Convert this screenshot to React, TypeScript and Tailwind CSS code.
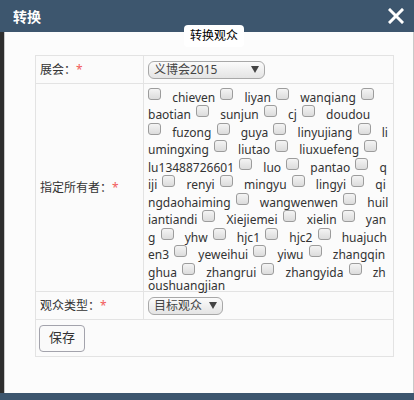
import React from 'react';

const owners = [
  'chieven', 'liyan', 'wanqiang', 'baotian', 'sunjun', 'cj', 'doudou', 'fuzong', 'guya',
  'linyujiang', 'liumingxing', 'liutao', 'liuxuefeng', 'lu13488726601', 'luo', 'pantao',
  'qiji', 'renyi', 'mingyu', 'lingyi', 'qingdaohaiming', 'wangwenwen', 'huiliantiandi',
  'Xiejiemei', 'xielin', 'yang', 'yhw', 'hjc1', 'hjc2', 'huajuchen3', 'yeweihui', 'yiwu',
  'zhangqinghua', 'zhangrui', 'zhangyida', 'zhoushuangjian',
];

const font = { fontFamily: '"Noto Sans", "Noto Sans CJK SC", sans-serif' };

function Label({ text }: { text: string }) {
  return (
    <span className="text-[12px] text-[#333]">
      {text}：<span className="text-[#f25a5a]">*</span>
    </span>
  );
}

function FakeSelect({ value, width }: { value: string; width: string }) {
  return (
    <div
      className={`${width} h-[18px] flex items-center justify-between rounded-[6px] border border-[#a8a8a8] bg-gradient-to-b from-[#fbfbfb] to-[#e4e4e4] pl-[5px] pr-[5px] text-[12px] leading-none text-[#444]`}
    >
      <span>{value}</span>
      <svg width="8" height="7" viewBox="0 0 8 7">
        <path d="M0 0 H8 L4 7 Z" fill="#444" />
      </svg>
    </div>
  );
}

function Checkbox() {
  return (
    <span className="inline-block align-baseline w-[13px] h-[12px] mt-[1.5px] mb-[2px] mr-[8px] rounded-[3px] border border-[#9c9c9c] bg-gradient-to-b from-[#f4f4f4] to-[#dcdcdc]" />
  );
}

export default function App() {
  return (
    <div className="w-[414px] h-[400px] bg-[#2e2e2e] flex flex-col overflow-hidden" style={font}>
      <div className="h-[32px] shrink-0 bg-[#3d566e] flex items-center justify-between pl-[13px] pr-[10px]">
        <span className="text-white font-bold text-[14px]">转换</span>
        <svg width="16" height="16" viewBox="0 0 16 16">
          <path d="M2 2 L14 14 M14 2 L2 14" stroke="#fff" strokeWidth="3" strokeLinecap="square" />
        </svg>
      </div>

      <div className="flex-1 flex pl-[4px]">
        <div className="w-[410px] bg-[#fcfcfc] border-l border-r border-[#c9c9c9]">
          <div className="-mt-[7px] ml-[179px] w-[60px] h-[22px] rounded-[4px] bg-white flex items-center justify-center text-[12px] text-black">
            转换观众
          </div>

          <div className="ml-[30px] mt-[8px] w-[359px] border border-[#e3e3e3] bg-[#fbfbfb]">
            <div className="flex h-[28px] border-b border-[#e3e3e3]">
              <div className="w-[108px] shrink-0 border-r border-[#e3e3e3] pl-[4px] flex items-center">
                <Label text="展会" />
              </div>
              <div className="flex-1 pl-[4px] flex items-center">
                <FakeSelect value="义博会2015" width="w-[117px]" />
              </div>
            </div>

            <div className="flex h-[208px] border-b border-[#e3e3e3]">
              <div className="w-[108px] shrink-0 border-r border-[#e3e3e3] pl-[4px] flex items-center">
                <Label text="指定所有者" />
              </div>
              <div className="flex-1 pl-[4px] pr-[4px] pt-[2px] text-[12px] leading-[13px] text-[#333] break-all">
                {owners.map((name) => (
                  <React.Fragment key={name}>
                    <Checkbox /> <span className="pr-[2px]">{name}</span>{' '}
                  </React.Fragment>
                ))}
              </div>
            </div>

            <div className="flex h-[28px] border-b border-[#e3e3e3]">
              <div className="w-[108px] shrink-0 border-r border-[#e3e3e3] pl-[4px] flex items-center">
                <Label text="观众类型" />
              </div>
              <div className="flex-1 pl-[4px] flex items-center">
                <FakeSelect value="目标观众" width="w-[75px]" />
              </div>
            </div>

            <div className="h-[36px] pl-[3px] flex items-center">
              <button
                type="button"
                className="w-[46px] h-[27px] rounded-[4px] border border-[#a3a3ac] bg-[#fafafa] text-[13px] text-[#333]"
              >
                保存
              </button>
            </div>
          </div>
        </div>
      </div>

      <div className="h-[7px] shrink-0 bg-[#3d566e]" />
    </div>
  );
}
